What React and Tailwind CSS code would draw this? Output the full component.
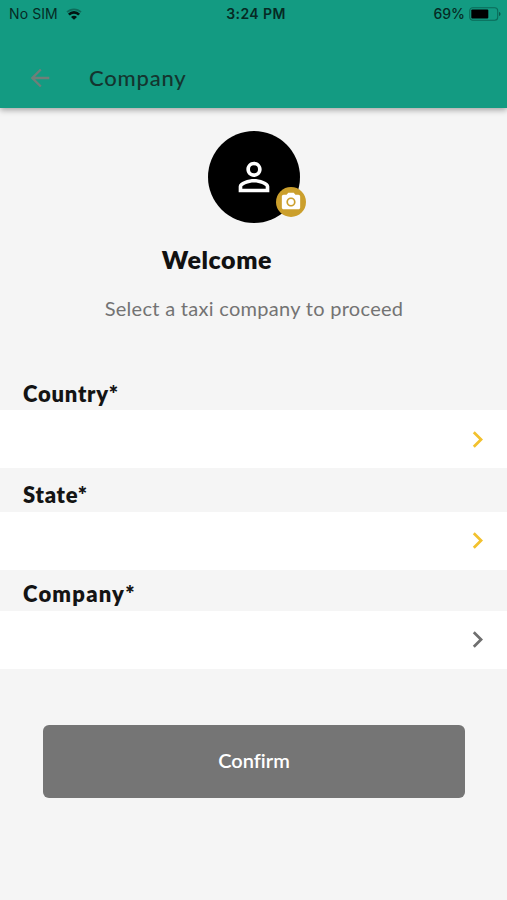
import { MdArrowBack, MdCameraAlt, MdChevronRight, MdPersonOutline } from 'react-icons/md';

const fields = [
  {
    label: 'Country*',
    labelClass: 'h-[63px] tracking-[0.75px]',
    rowClass: 'h-[58px]',
    iconClass: 'text-[#f2c12e]',
  },
  {
    label: 'State*',
    labelClass: 'h-[44px] pb-px tracking-[0.75px]',
    rowClass: 'h-[58px] pb-0.5',
    iconClass: 'text-[#f2c12e]',
  },
  {
    label: 'Company*',
    labelClass: 'h-[41px] pb-px tracking-[1.2px]',
    rowClass: 'h-[58px] pb-0.5',
    iconClass: 'text-[#6f6f6f]',
  },
];

const WifiIcon = () => (
  <svg width="16" height="12" viewBox="0 0 16 12" fill="none">
    <path d="M1 4.2a10 10 0 0 1 14 0" stroke="#000" strokeOpacity="0.3" strokeWidth="1.8" />
    <path d="M2.9 6.6a7 7 0 0 1 10.2 0" stroke="#031512" strokeWidth="2.6" />
    <path d="M8 11.8 5 8.9a4.2 4.2 0 0 1 6 0z" fill="#031512" />
  </svg>
);

const BatteryIcon = () => (
  <svg width="32" height="14" viewBox="0 0 32 14" fill="none">
    <rect x="0.7" y="0.7" width="28" height="12.6" rx="3" stroke="#0b6a58" strokeWidth="1.1" />
    <rect x="2.3" y="2.6" width="17" height="8.8" rx="1" fill="#000" />
    <path d="M30 5v4c1-.4 1.5-1.1 1.5-2S31 5.4 30 5z" fill="#0b5a4b" />
  </svg>
);

const StatusBar = () => (
  <div className="grid grid-cols-3 items-center h-[27px] pl-[9px] pr-[6px] font-['Inter',sans-serif] text-[14px] text-[#062a24]">
    <div className="flex items-center gap-2">
      <span className="tracking-[0.1px]">No SIM</span>
      <WifiIcon />
    </div>
    <span className="pl-0.5 text-center font-semibold tracking-[0.4px]">3:24 PM</span>
    <div className="flex items-center justify-end gap-1">
      <span className="font-medium">69%</span>
      <BatteryIcon />
    </div>
  </div>
);

const Header = () => (
  <header className="relative h-[108px] bg-[#139b82] shadow-[0_2px_6px_rgba(0,0,0,0.35)]">
    <StatusBar />
    <div className="flex items-center h-[102px] pl-[26px]">
      <MdArrowBack className="size-7 text-[#6f7f79]" />
      <h1 className="ml-[35px] text-[22px] leading-7 font-medium tracking-[0.8px] text-[#14352f]">Company</h1>
    </div>
  </header>
);

const Avatar = () => (
  <div className="relative flex items-center justify-center size-[92px] rounded-full bg-black">
    <MdPersonOutline className="size-[46px] text-white" />
    <div className="absolute -right-1.5 bottom-[6px] flex items-center justify-center size-[30px] rounded-full bg-[#cb9f2c]">
      <MdCameraAlt className="size-[22px] text-white" />
    </div>
  </div>
);

const Field = ({ label, labelClass, rowClass, iconClass }) => (
  <div>
    <div className={`flex items-end pl-[23px] ${labelClass}`}>
      <label className="text-[22px] leading-8 font-extrabold text-[#141414]">{label}</label>
    </div>
    <div className={`flex items-center justify-end bg-white pr-[13px] ${rowClass}`}>
      <MdChevronRight className={`size-[33px] ${iconClass}`} />
    </div>
  </div>
);

export default function App() {
  return (
    <div className="flex flex-col h-[900px] w-[507px] overflow-hidden bg-[#f5f5f5] font-['Lato',sans-serif]">
      <Header />
      <main className="flex flex-col">
        <div className="flex flex-col items-center pt-[23px] pl-px">
          <Avatar />
          <h2 className="mt-5 mr-[74px] text-[25px] leading-8 font-extrabold tracking-[0.6px] text-[#111]">
            Welcome
          </h2>
          <p className="mt-[19px] text-[20px] leading-7 tracking-[0.29px] text-[#737373]">
            Select a taxi company to proceed
          </p>
        </div>
        <div className="mt-[25px]">
          {fields.map((field) => (
            <Field key={field.label} {...field} />
          ))}
        </div>
        <button className="ml-[43px] mr-[42px] mt-14 h-[73px] pb-[3px] rounded-md bg-[#757575] text-[20px] font-semibold text-white [font-variant-ligatures:none]">
          Confirm
        </button>
      </main>
    </div>
  );
}
